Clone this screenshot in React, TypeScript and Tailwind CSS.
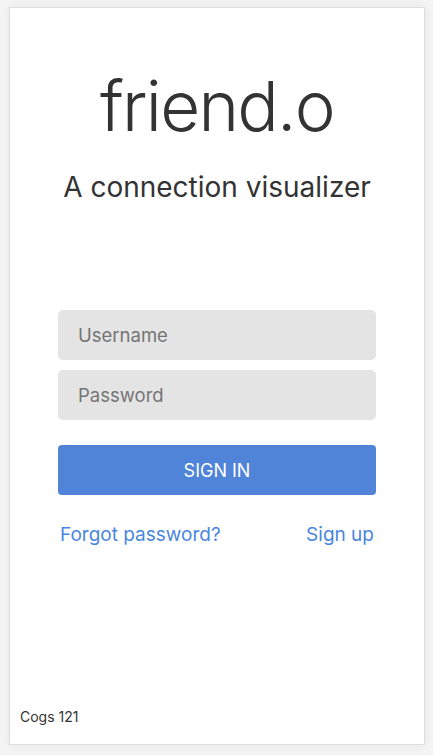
export default function App() {
  return (
    <div className="min-h-[755px] bg-[#f4f4f4] pt-[7px] pl-[9px] font-['Inter',sans-serif]">
      <div className="flex h-[738px] w-[416px] flex-col border border-[#dedede] bg-white shadow-[0_0_10px_rgba(0,0,0,0.06)]">
        {/* Header */}
        <div className="flex flex-col items-center pt-[64px]">
          <h1 className="text-[69px] leading-none font-light tracking-tight text-[#333]">friend.o</h1>
          <p className="mt-[32px] text-[28px] leading-none text-[#333]">A connection visualizer</p>
        </div>

        {/* Form */}
        <div className="mx-[48px] mt-[109px] flex flex-col">
          <input
            placeholder="Username"
            className="h-[50px] rounded-[5px] bg-[#e4e4e4] px-[20px] text-[18.5px] text-[#333] placeholder:text-[#757575] outline-none"
          />
          <input
            type="password"
            placeholder="Password"
            className="mt-[10px] h-[50px] rounded-[5px] bg-[#e4e4e4] px-[20px] text-[18.5px] text-[#333] placeholder:text-[#757575] outline-none"
          />
          <button className="mt-[25px] h-[50px] rounded-[4px] bg-[#4f84d8] text-[18px] text-white">
            SIGN IN
          </button>
          <div className="mt-[26px] flex items-center justify-between px-[2px] text-[19px] text-[#4a86e0]">
            <a href="#">Forgot password?</a>
            <a href="#">Sign up</a>
          </div>
        </div>

        {/* Footer */}
        <div className="mt-auto pb-[17px] pl-[10px] text-[14px] text-[#333]">Cogs 121</div>
      </div>
    </div>
  );
}
